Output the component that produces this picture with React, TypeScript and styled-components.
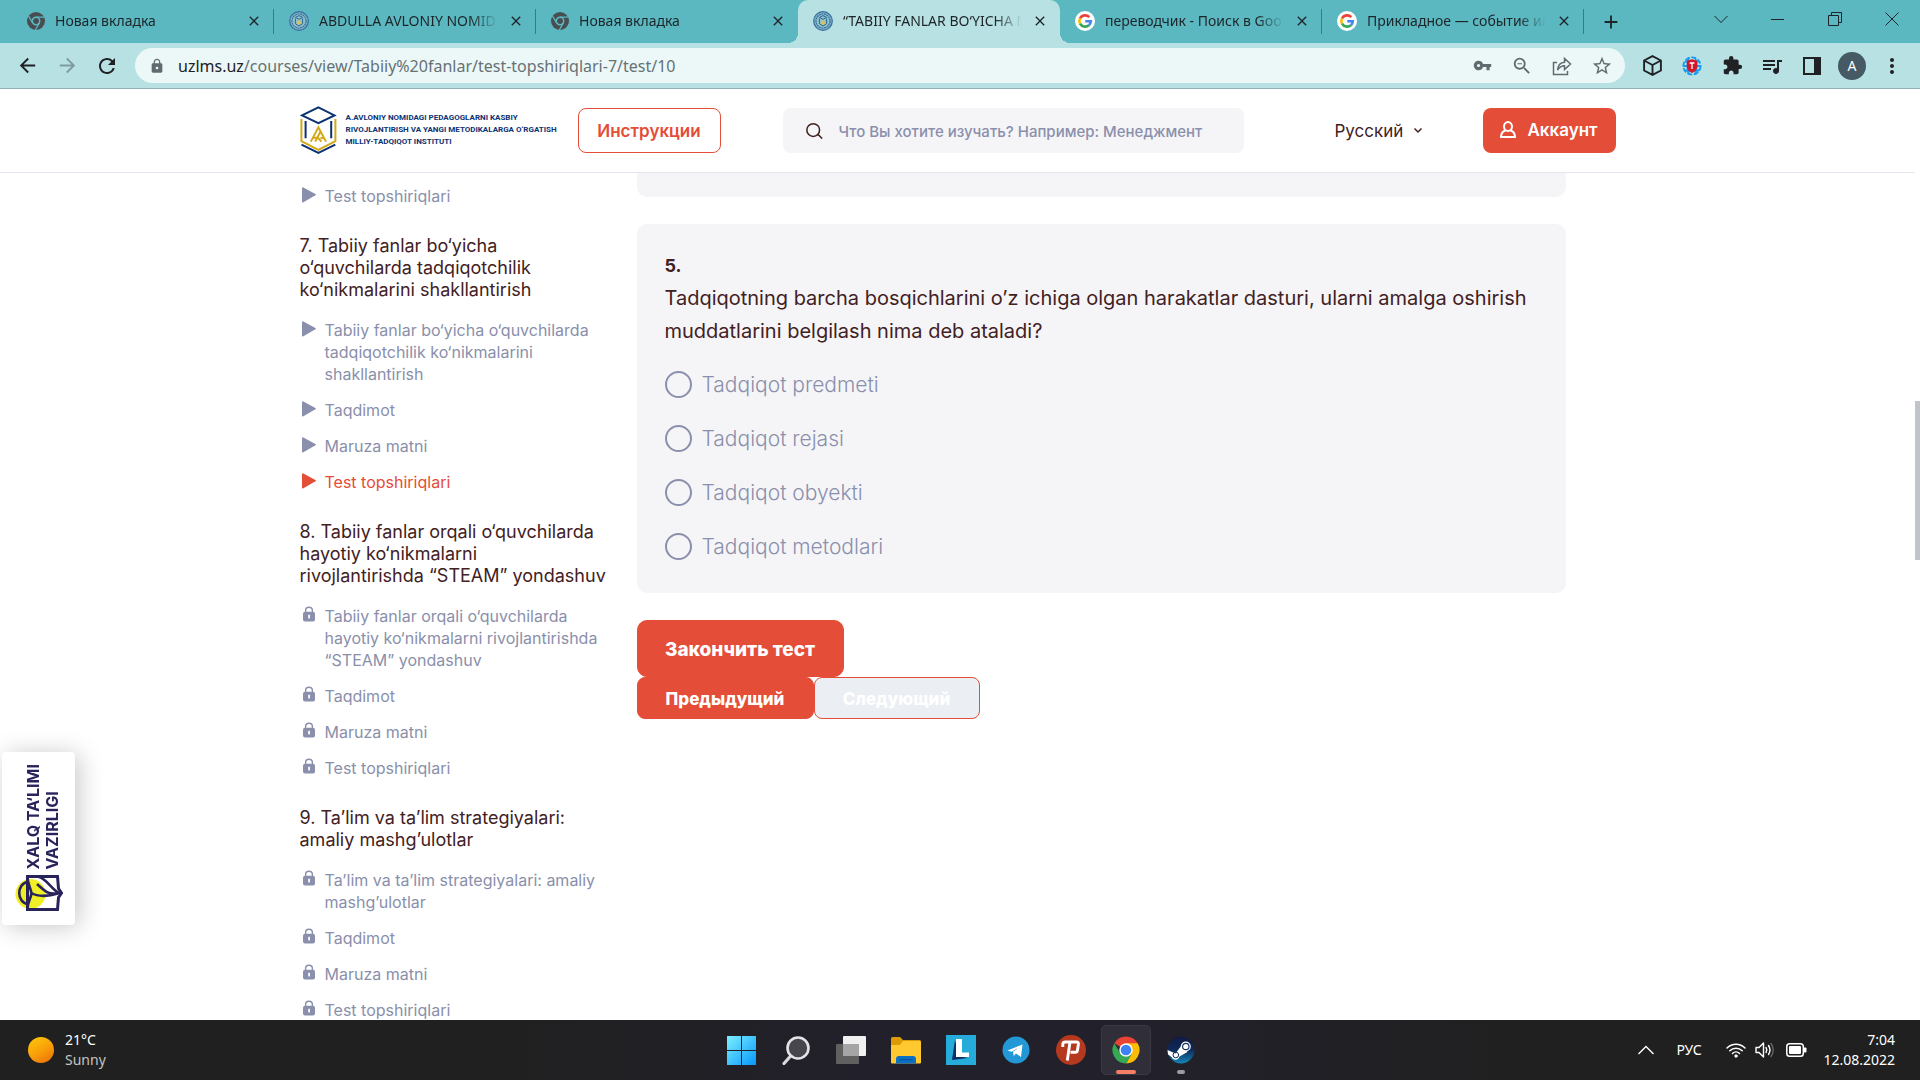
import React from "react";
import styled, { createGlobalStyle, css } from "styled-components";
import {
  MdArrowBack,
  MdArrowForward,
  MdRefresh,
  MdLock,
  MdVpnKey,
  MdZoomOut,
  MdStarBorder,
  MdExtension,
  MdQueueMusic,
  MdMoreVert,
  MdClose,
  MdAdd,
} from "react-icons/md";

const systemFont = `"Noto Sans", "Open Sans", sans-serif`;
const pageFont = `Inter, "Open Sans", sans-serif`;

const colors = {
  teal: "#5bb8c1",
  tealLight: "#b8e1e4",
  omnibox: "#ecf8f8",
  accent: "#e44d37",
  ink: "#42211f",
  muted: "#8a8fab",
  panel: "#f5f5f8",
  navy: "#0b3272",
  gold: "#d4a919",
};

const GlobalStyle = createGlobalStyle`
  *, *::before, *::after { box-sizing: border-box; }
  body { margin: 0; background: #fff; }
  button, input, select { font: inherit; }
  h2, p, ul, fieldset { margin: 0; padding: 0; border: 0; }
  button { border: 0; background: none; padding: 0; color: inherit; }
  a { color: inherit; text-decoration: none; }
  svg { display: block; flex: none; }
`;

const Desktop = styled.div`
  display: flex;
  flex-direction: column;
  height: 100vh;
  overflow: hidden;
  font-family: ${systemFont};
`;

/* Browser tabs */
const TabStrip = styled.div`
  display: flex;
  flex: none;
  height: 43px;
  padding-left: 12px;
  background: ${colors.teal};
  color: #1d2528;
`;

const Tab = styled.div<{ $active?: boolean; $line?: boolean }>`
  display: flex;
  align-items: center;
  flex: 0 1 262px;
  min-width: 0;
  padding: 0 12px 2px 15px;
  gap: 10px;
  font-size: 14px;
  position: relative;
  ${(p) =>
    p.$active &&
    css`
      background: ${colors.tealLight};
      border-radius: 10px 10px 0 0;
      &::before,
      &::after {
        content: "";
        position: absolute;
        bottom: 0;
        width: 10px;
        height: 10px;
      }
      &::before {
        right: 100%;
        background: radial-gradient(circle at 0 0, transparent 10px, ${colors.tealLight} 10px);
      }
      &::after {
        left: 100%;
        background: radial-gradient(circle at 100% 0, transparent 10px, ${colors.tealLight} 10px);
      }
    `}
  ${(p) =>
    p.$line &&
    css`
      background: linear-gradient(#3a7a81, #3a7a81) right center / 1px 25px no-repeat;
    `}
`;

const TabTitle = styled.span`
  flex: 1;
  min-width: 0;
  overflow: hidden;
  white-space: nowrap;
  mask-image: linear-gradient(to right, #000 85%, transparent 100%);
`;

const IconButton = styled.button<{ $w?: number }>`
  display: flex;
  align-items: center;
  justify-content: center;
  flex: none;
  width: ${(p) => p.$w ?? 16}px;
`;

const WindowButtons = styled.div`
  display: flex;
  margin-left: auto;
  padding-bottom: 6px;
`;

/* Browser toolbar */
const Toolbar = styled.div`
  display: flex;
  align-items: center;
  flex: none;
  height: 46px;
  padding: 0 8px 0 7px;
  background: ${colors.tealLight};
  border-bottom: 1px solid #8db2b7;
  color: #202124;
`;

const Omnibox = styled.div`
  display: flex;
  align-items: center;
  flex: 1;
  height: 35px;
  margin: 0 7px 0 8px;
  padding: 0 3px 0 14px;
  border-radius: 18px;
  background: ${colors.omnibox};
  color: #5f6b6e;
`;

const Url = styled.span`
  flex: 1;
  margin-left: 13px;
  font-size: 16px;
  color: #667174;
  b {
    font-weight: 400;
    color: #202124;
  }
`;

const Avatar = styled.button`
  width: 28px;
  height: 28px;
  margin: 0 6px;
  border-radius: 50%;
  background: #455a64;
  color: #fff;
  font-size: 14px;
`;

/* Page */
const Viewport = styled.div`
  display: flex;
  flex: 1;
  min-height: 0;
  position: relative;
`;

const Page = styled.div`
  display: flex;
  flex-direction: column;
  flex: 1;
  min-width: 0;
  font-family: ${pageFont};
  color: ${colors.ink};
`;

const ScrollTrack = styled.div`
  flex: none;
  width: 5px;
  padding-top: 312px;
`;

const ScrollThumb = styled.div`
  height: 159px;
  background: #c1c4c8;
`;

const Header = styled.header`
  flex: none;
  border-bottom: 1px solid #e4e5ee;
`;

const HeaderInner = styled.div`
  display: flex;
  align-items: center;
  width: 100%;
  max-width: 1316px;
  height: 83px;
  margin: 0 auto;
  padding-bottom: 1px;
`;

const Brand = styled.a`
  display: flex;
  align-items: center;
  gap: 9px;
  width: 278px;
  color: ${colors.navy};
  font: 700 8px/12px Roboto, sans-serif;
  white-space: nowrap;
`;

const OutlineButton = styled.button`
  width: 143px;
  height: 45px;
  padding-top: 2px;
  border: 1px solid ${colors.accent};
  border-radius: 8px;
  color: ${colors.accent};
  font-size: 17px;
  font-weight: 600;
`;

const Search = styled.label`
  display: flex;
  align-items: center;
  gap: 16px;
  width: 461px;
  height: 45px;
  margin-left: 62px;
  padding: 0 23px;
  border-radius: 8px;
  background: ${colors.panel};
  input {
    flex: 1;
    min-width: 0;
    padding: 2px 0 0;
    border: 0;
    outline: 0;
    background: none;
    font-size: 15px;
    font-weight: 500;
  }
  input::placeholder {
    color: ${colors.muted};
    opacity: 1;
  }
`;

const Language = styled.label`
  display: flex;
  align-items: center;
  gap: 9px;
  margin-left: 91px;
  select {
    appearance: none;
    padding: 2px 0 0;
    border: 0;
    background: none;
    color: ${colors.ink};
    font-size: 17px;
  }
`;

const Account = styled.button`
  display: flex;
  align-items: center;
  justify-content: center;
  gap: 11px;
  width: 133px;
  height: 45px;
  margin-left: auto;
  border-radius: 8px;
  background: ${colors.accent};
  color: #fff;
  font-size: 17px;
  font-weight: 600;
`;

const Content = styled.div`
  display: grid;
  grid-template-columns: 312px minmax(0, 1fr);
  grid-template-rows: minmax(0, 1fr);
  column-gap: 25px;
  flex: 1;
  min-height: 0;
  width: 100%;
  max-width: 1316px;
  margin: 0 auto;
  padding-right: 50px;
  overflow: hidden;
`;

const Sidebar = styled.nav`
  padding-top: 12px;
`;

const SectionTitle = styled.h2`
  margin: 28px 0 18px;
  font-size: 18px;
  font-weight: 400;
  line-height: 22px;
  white-space: pre-line;
`;

const LessonList = styled.ul`
  display: grid;
  gap: 14px;
  list-style: none;
`;

const Lesson = styled.a<{ $current?: boolean }>`
  display: flex;
  gap: 9px;
  padding-left: 2px;
  font-size: 16px;
  line-height: 22px;
  color: ${(p) => (p.$current ? colors.accent : colors.muted)};
`;

const Main = styled.main`
  display: flex;
  flex-direction: column;
  align-items: stretch;
`;

const PreviousCard = styled.div`
  flex: none;
  height: 24px;
  margin-bottom: 27px;
  border-radius: 0 0 10px 10px;
  background: ${colors.panel};
`;

const Card = styled.fieldset`
  flex: none;
  margin-bottom: 27px;
  padding: 26px 28px 20px;
  border-radius: 10px;
  background: ${colors.panel};
`;

const Question = styled.div`
  margin-bottom: 9px;
  font-size: 20px;
  line-height: 33px;
  strong {
    display: block;
    line-height: 32px;
    font-size: 18px;
  }
`;

const Option = styled.label`
  display: flex;
  align-items: center;
  gap: 10px;
  height: 54px;
  color: ${colors.muted};
  font-size: 21px;
  font-weight: 300;
  input {
    appearance: none;
    width: 27px;
    height: 27px;
    margin: 0;
    border: 2px solid ${colors.muted};
    border-radius: 50%;
  }
`;

const TestButton = styled.button<{ $large?: boolean; $off?: boolean }>`
  align-self: flex-start;
  width: ${(p) => (p.$large ? 207 : p.$off ? 166 : 177)}px;
  height: ${(p) => (p.$large ? 57 : 42)}px;
  padding-top: 2px;
  border: 1px solid ${colors.accent};
  border-radius: ${(p) => (p.$large ? 10 : 8)}px;
  background: ${(p) => (p.$off ? "#ebeef3" : colors.accent)};
  color: #fff;
  font-size: ${(p) => (p.$large ? 19 : 17)}px;
  font-weight: 800;
`;

const Row = styled.div`
  display: flex;
`;

const Ministry = styled.a`
  position: absolute;
  left: 2px;
  top: 663px;
  display: flex;
  flex-direction: column;
  align-items: center;
  justify-content: space-between;
  width: 73px;
  height: 173px;
  padding: 12px 0 13px;
  border-radius: 4px;
  background: #fff;
  box-shadow: 4px 2px 24px rgba(0, 0, 0, 0.22);
  color: #29235c;
  font: 700 16px/19px Inter, sans-serif;
  span {
    margin-left: 8px;
    writing-mode: vertical-rl;
    transform: rotate(180deg);
    white-space: nowrap;
  }
`;

/* Taskbar */
const Taskbar = styled.footer`
  display: grid;
  grid-template-columns: 1fr auto 1fr;
  align-items: center;
  flex: none;
  height: 60px;
  background: linear-gradient(90deg, #202020 25%, #22202a 45%, #22202a 60%, #202020 80%);
  color: #fff;
  font-size: 14px;
  line-height: 20px;
`;

const Weather = styled.div`
  display: flex;
  align-items: center;
  gap: 11px;
  padding-left: 28px;
  small {
    display: block;
    font-size: 14px;
    color: #c4c4c4;
  }
`;

const Sun = styled.div`
  width: 26px;
  height: 26px;
  border-radius: 50%;
  background: linear-gradient(150deg, #ffc80a, #f9a208 50%, #ea6a08);
`;

const Apps = styled.div`
  display: flex;
  gap: 5px;
  padding-left: 1px;
`;

const AppButton = styled.button<{ $state?: "active" | "open" }>`
  display: flex;
  align-items: center;
  justify-content: center;
  position: relative;
  width: 50px;
  height: 50px;
  border: 1px solid ${(p) => (p.$state === "active" ? "#3b3943" : "transparent")};
  border-radius: 5px;
  background: ${(p) => (p.$state === "active" ? "#302e38" : "none")};
  &::after {
    content: "";
    position: absolute;
    bottom: 0;
    width: ${(p) => (p.$state === "active" ? 20 : p.$state ? 8 : 0)}px;
    height: 4px;
    border-radius: 2px;
    background: ${(p) => (p.$state === "active" ? "#f47f65" : "#9b9aa0")};
  }
`;

const Tray = styled.div`
  display: flex;
  align-items: center;
  justify-content: flex-end;
  padding-right: 25px;
`;

const Clock = styled.div`
  width: 79px;
  text-align: right;
`;

/* Drawings */
const ChromeGray = () => (
  <svg width="18" height="18" viewBox="0 0 18 18">
    <circle cx="9" cy="9" r="9" fill="#474d50" />
    <circle cx="9" cy="9" r="3.7" fill="none" stroke={colors.teal} strokeWidth="1.5" />
    <path d="M9 5.1h8.2M5.6 10.9L1.5 4M12.4 10.9L8.3 18" stroke={colors.teal} strokeWidth="1.3" />
  </svg>
);

const Seal = () => (
  <svg width="20" height="20" viewBox="0 0 20 20">
    <circle cx="10" cy="10" r="9.3" fill="#7fb2c6" stroke="#356f9c" strokeWidth="1.2" />
    <circle cx="10" cy="10" r="7" fill="#8fc2cb" stroke="#3a73a0" strokeWidth="1.2" strokeDasharray="2 .6" />
    <path d="M10 4.6l3.6 1.8L10 8.3 6.4 6.4zM6.4 7.5v5.2l3.6 2.3 3.6-2.3V7.5" fill="none" stroke="#2f6695" />
    <path d="M7.6 12.3L10 8.6l2.4 3.7L10 14z" fill="#d6c35a" />
  </svg>
);

const GoogleIcon = () => (
  <svg width="20" height="20" viewBox="0 0 20 20">
    <circle cx="10" cy="10" r="10" fill="#fff" />
    <g fill="none" strokeWidth="2.6">
      <path d="M14.3 6.2A5.8 5.8 0 0 0 5 7.3" stroke="#ea4335" />
      <path d="M5 7.3a5.8 5.8 0 0 0 0 5.4" stroke="#fbbc05" />
      <path d="M5 12.7a5.8 5.8 0 0 0 8.9 1.5" stroke="#34a853" />
      <path d="M13.9 14.2a5.8 5.8 0 0 0 1.9-4H10.3" stroke="#4285f4" />
    </g>
  </svg>
);

const Line = ({ d, s = 20, w = 1, box = 20 }: { d: string; s?: number; w?: number; box?: number }) => (
  <svg width={s} height={s} viewBox={`0 0 ${box} ${box}`} fill="none" stroke="currentColor" strokeWidth={w}>
    <path d={d} />
  </svg>
);

const ShieldGlobe = () => (
  <svg width="20" height="20" viewBox="0 0 20 20">
    <g fill="none" stroke="#159cf0" strokeWidth="1.8">
      <circle cx="10" cy="10" r="8.6" strokeDasharray="5 1.6" />
      <path d="M1 10h18M3 5.5h14M3 14.5h14M7 1.5c-2 5-2 12 0 17M13 1.5c2 5 2 12 0 17" />
    </g>
    <path d="M10 3.2l5.2 1.6v5.6c0 3.2-2.4 5.2-5.2 6.6-2.8-1.4-5.2-3.4-5.2-6.6V4.8z" fill="#d3182c" />
    <path d="M7.6 7h4.8M10 7v6" stroke="#fff" strokeWidth="1.3" />
  </svg>
);

const BrandMark = () => (
  <svg width="37" height="48" viewBox="0 0 37 48" fill="none" strokeWidth="2">
    <path d="M18.4 1.4L34.5 9.4 18.4 17.2 2 9.4z" stroke={colors.navy} />
    <path d="M1.4 13v22.2l17 8.6 17-8.6V13" stroke={colors.gold} />
    <path d="M5.6 15v17.3M31.2 15v17.3M1.5 38.6l16.9 8.2 16.9-8.2" stroke={colors.navy} />
    <path d="M10.8 35.6l7.6-14.2 7.6 14.2M15.2 35.6l5.2-9.8M13 31.8h5l3.4 3.8M20.5 32h4" stroke={colors.gold} />
  </svg>
);

const PlayIcon = () => (
  <svg width="14" height="18" viewBox="0 -2 14 18">
    <path d="M0 1.2Q0-.3 1.4.4L13.4 7q1 .6 0 1.2L1.4 15.3Q0 15.9 0 14.5z" fill="currentColor" />
  </svg>
);

const LockIcon = () => (
  <svg width="14" height="17" viewBox="0 -1 14 17">
    <path d="M3.6 7V4.6a3.4 3.4 0 0 1 6.8 0V7" fill="none" stroke="currentColor" strokeWidth="1.4" />
    <rect x="1" y="5.8" width="12" height="9.6" rx="2" fill="currentColor" />
    <rect x="6.2" y="8.8" width="1.8" height="3.6" fill="#fff" />
  </svg>
);

const MinistryMark = () => (
  <svg width="48" height="38" viewBox="0 0 48 38" fill="none" stroke="#29235c" strokeWidth="3">
    <circle cx="15.5" cy="20" r="15" fill="#f0ee26" stroke="none" />
    <path d="M12.5 2.5h30l1 12 3 4.5-3 4.5-1 12h-30z" />
    <path d="M12.5 8C1.5 10 1.5 28 12.5 30M12.5 2.5c0 8 3 10 4 17-1 6-4 8-4 16M24 3c8 2 12 12 20 16-12 2-14-2-22-9M16.5 19c8 5 18 3 28 0" strokeWidth="2.6" />
  </svg>
);

const StartIcon = () => (
  <svg width="30" height="30" viewBox="0 0 30 30">
    <defs>
      <linearGradient id="start" x1="0" y1="0" x2="1" y2="1">
        <stop stopColor="#7cf0ff" />
        <stop offset="1" stopColor="#0796fb" />
      </linearGradient>
    </defs>
    <path d="M1 1.5Q1 1 1.5 1H15v14H1zM16 1h13.5q.5 0 .5.5V15H16zM1 16h14v14H1.5Q1 30 1 29.5zM16 16h14v13.5q0 .5-.5.5H16z" fill="url(#start)" />
  </svg>
);

const SearchTask = () => (
  <svg width="30" height="30" viewBox="0 0 30 30">
    <path d="M10.5 20L3 28.5" stroke="#d8dadd" strokeWidth="3.2" strokeLinecap="round" />
    <circle cx="17" cy="13" r="10.5" fill="#46464c" stroke="#e2e4e6" strokeWidth="2.6" />
  </svg>
);

const TaskView = () => (
  <svg width="30" height="30" viewBox="0 0 30 30">
    <rect x="7" y="1" width="23" height="20" rx="1" fill="#f0f0f0" />
    <rect x="0" y="9" width="23" height="20" rx="1" fill="#606060" />
    <rect x="7" y="9" width="16" height="12" fill="#a5a5a5" />
  </svg>
);

const Folder = () => (
  <svg width="30" height="30" viewBox="0 0 30 30">
    <path d="M0 3.5Q0 2 1.5 2H9l3 3h16.5Q30 5 30 6.5V12H0z" fill="#dd9b08" />
    <path d="M0 10h9l3-4h16.5Q30 6 30 7.5v20q0 1-1 1H1q-1 0-1-1z" fill="#ffc92f" />
    <path d="M5 28.5V24q0-3 3-3h14q3 0 3 3v4.5z" fill="#0b6fc4" />
    <path d="M8.5 24.7h13" stroke="#084e96" />
  </svg>
);

const LetterL = () => (
  <svg width="30" height="30" viewBox="0 0 30 30">
    <path d="M0 0h30v30H0z" fill="#25acdb" />
    <path d="M9 5L6 25l16-2-9-2z" fill="#0b2f66" />
    <path d="M10 4h6v13.5h7V22H10z" fill="#fff" />
  </svg>
);

const Telegram = () => (
  <svg width="28" height="28" viewBox="0 0 28 28">
    <circle cx="14" cy="14" r="13.5" fill="#2298d6" />
    <path d="M5.5 14.5L20.5 8.5l-1.5 12.5-5-3.5-2.2 2.5-.8-4.3L17 11.5l-7.5 4.3z" fill="#fff" />
  </svg>
);

const PlayerP = () => (
  <svg width="30" height="30" viewBox="0 0 30 30">
    <circle cx="15" cy="15" r="15" fill="#b5391e" />
    <path d="M11.3 25.5L14 7M6.8 12V9.5q0-2.5 2.5-2.5h11.2q2.2 0 1.9 2l-.9 6.3q-.3 2-2.2 2H14.5" fill="none" stroke="#fff" strokeWidth="2.9" />
  </svg>
);

const Chrome = () => (
  <svg width="28" height="28" viewBox="0 0 28 28">
    <path d="M14 14L2.3 7.25A13.5 13.5 0 0 1 25.7 7.25z" fill="#ea4335" />
    <path d="M14 7.25h11.7A13.5 13.5 0 0 1 14 27.5l5.85-10.1z" fill="#fbbc05" />
    <path d="M14 27.5A13.5 13.5 0 0 1 2.3 7.25l5.85 10.12L14 20.75l5.85-3.35z" fill="#34a853" />
    <circle cx="14" cy="14" r="6.75" fill="#fff" />
    <circle cx="14" cy="14" r="5.3" fill="#3b82f4" />
  </svg>
);

const Steam = () => (
  <svg width="28" height="28" viewBox="0 0 28 28">
    <defs>
      <linearGradient id="steam" x1="0" y1="0" x2="0" y2="1">
        <stop stopColor="#101a45" />
        <stop offset=".5" stopColor="#0f2a58" />
        <stop offset="1" stopColor="#1387b8" />
      </linearGradient>
    </defs>
    <circle cx="14" cy="14" r="13.5" fill="url(#steam)" />
    <path d="M.5 14l8 3.5 6-8 6 6.5-8 4.5a4.2 4.2 0 0 1-8 .5L1 18.5z" fill="#fff" />
    <circle cx="18.8" cy="10.5" r="5" fill="#fff" />
    <circle cx="18.8" cy="10.5" r="3.2" fill="#fff" stroke="#14305e" strokeWidth="1.2" />
    <circle cx="8.8" cy="19" r="2.8" fill="none" stroke="#14305e" />
  </svg>
);

const Wifi = () => (
  <svg width="20" height="16" viewBox="0 0 20 16" fill="none" stroke="#fff" strokeWidth="1.5" strokeLinecap="round">
    <path d="M1 6a12.7 12.7 0 0 1 18 0M3.8 8.8a8.8 8.8 0 0 1 12.4 0M6.5 11.5a5 5 0 0 1 7 0" />
    <circle cx="10" cy="14" r="1.2" fill="#fff" strokeWidth="1" />
  </svg>
);

const Volume = () => (
  <svg width="20" height="18" viewBox="0 0 20 18" fill="none" stroke="#fff" strokeWidth="1.4" strokeLinecap="round" strokeLinejoin="round">
    <path d="M1 6.5h3L8.5 2v14L4 11.5H1zM11 6.5q1.6 2.5 0 5M13.5 4.5q3 4.5 0 9" />
    <path d="M16 2.5q4.5 6.5 0 13" stroke="#666" />
  </svg>
);

const Battery = () => (
  <svg width="21" height="14" viewBox="0 0 21 14">
    <rect x=".8" y=".8" width="16.5" height="12.4" rx="2.8" fill="none" stroke="#fff" strokeWidth="1.5" />
    <rect x="3" y="3" width="12" height="8" rx="1" fill="#fff" />
    <path d="M18 4.5h1.5q1 0 1 1v3q0 1-1 1H18z" fill="#fff" />
  </svg>
);

const tabs = [
  { title: "Новая вкладка", icon: <ChromeGray />, line: true },
  { title: "ABDULLA AVLONIY NOMID", icon: <Seal />, line: true },
  { title: "Новая вкладка", icon: <ChromeGray /> },
  { title: "“TABIIY FANLAR BO‘YICHA M", icon: <Seal />, active: true },
  { title: "переводчик - Поиск в Goo", icon: <GoogleIcon />, line: true },
  { title: "Прикладное — событие ил", icon: <GoogleIcon />, line: true },
];

const sections = [
  {
    title: "7. Tabiiy fanlar bo‘yicha\no‘quvchilarda tadqiqotchilik ko‘nikmalarini shakllantirish",
    lessons: ["Tabiiy fanlar bo‘yicha o‘quvchilarda tadqiqotchilik ko‘nikmalarini shakllantirish", "Taqdimot", "Maruza matni", "Test topshiriqlari"],
    current: 3,
  },
  {
    title: "8. Tabiiy fanlar orqali o‘quvchilarda hayotiy ko‘nikmalarni\nrivojlantirishda “STEAM” yondashuv",
    lessons: ["Tabiiy fanlar orqali o‘quvchilarda hayotiy ko‘nikmalarni rivojlantirishda “STEAM” yondashuv", "Taqdimot", "Maruza matni", "Test topshiriqlari"],
    locked: true,
  },
  {
    title: "9. Ta’lim va ta’lim strategiyalari: amaliy mashg’ulotlar",
    lessons: ["Ta’lim va ta’lim strategiyalari: amaliy mashg’ulotlar", "Taqdimot", "Maruza matni", "Test topshiriqlari"],
    locked: true,
  },
];

const options = ["Tadqiqot predmeti", "Tadqiqot rejasi", "Tadqiqot obyekti", "Tadqiqot metodlari"];

export default function App() {
  return (
    <Desktop>
      <GlobalStyle />
      <TabStrip>
        {tabs.map((t, i) => (
          <Tab key={i} $active={t.active} $line={t.line}>
            {t.icon}
            <TabTitle>{t.title}</TabTitle>
            <IconButton aria-label="Закрыть вкладку"><MdClose size={16} /></IconButton>
          </Tab>
        ))}
        <IconButton $w={54} aria-label="Новая вкладка"><MdAdd size={22} /></IconButton>
        <WindowButtons>
          <IconButton $w={57} aria-label="Поиск вкладок"><Line s={14} box={14} d="M.5 4l6.5 6.5L13.5 4" /></IconButton>
          <IconButton $w={57} aria-label="Свернуть"><Line s={14} box={14} d="M0 7.5h13" /></IconButton>
          <IconButton $w={57} aria-label="Развернуть"><Line s={14} box={14} d="M.5 3.5h10v10H.5zM3.5 3.5V.5h10v10h-3" /></IconButton>
          <IconButton $w={57} aria-label="Закрыть"><Line s={14} box={14} d="M.5.5l13 13M13.5.5l-13 13" /></IconButton>
        </WindowButtons>
      </TabStrip>
      <Toolbar>
        <IconButton $w={40} aria-label="Назад"><MdArrowBack size={23} /></IconButton>
        <IconButton $w={40} aria-label="Вперёд"><MdArrowForward size={23} color="#7f9b9f" /></IconButton>
        <IconButton $w={40} aria-label="Обновить"><MdRefresh size={24} /></IconButton>
        <Omnibox>
          <MdLock size={16} />
          <Url><b>uzlms.uz</b>/courses/view/Tabiiy%20fanlar/test-topshiriqlari-7/test/10</Url>
          <IconButton $w={40} aria-label="Пароли"><MdVpnKey size={19} /></IconButton>
          <IconButton $w={40} aria-label="Масштаб"><MdZoomOut size={22} /></IconButton>
          <IconButton $w={40} aria-label="Поделиться">
            <Line w={1.5} d="M5 6.5H1.5v12h14V15M5.5 14c.5-5 3-7.5 7-7.7V2.5l6 5.5-6 5.5V9.8c-3 0-5 1.2-7 4.2z" />
          </IconButton>
          <IconButton $w={40} aria-label="Закладка"><MdStarBorder size={22} /></IconButton>
        </Omnibox>
        <IconButton $w={40} aria-label="Куб">
          <Line s={21} w={1.8} d="M10 1l8 4.2v9.6L10 19l-8-4.2V5.2zM2 5.2l8 4.3 8-4.3M10 9.5V19" />
        </IconButton>
        <IconButton $w={40} aria-label="Щит"><ShieldGlobe /></IconButton>
        <IconButton $w={40} aria-label="Расширения"><MdExtension size={21} /></IconButton>
        <IconButton $w={40} aria-label="Музыка"><MdQueueMusic size={24} /></IconButton>
        <IconButton $w={40} aria-label="Боковая панель">
          <svg width="18" height="18" viewBox="0 0 18 18"><path d="M0 0h18v18H0zM2 2v14h9V2z" fillRule="evenodd" fill="currentColor" /></svg>
        </IconButton>
        <Avatar aria-label="Профиль">A</Avatar>
        <IconButton $w={40} aria-label="Меню"><MdMoreVert size={24} /></IconButton>
      </Toolbar>

      <Viewport>
        <Page>
          <Header>
            <HeaderInner>
              <Brand href="#">
                <BrandMark />
                <span>
                  A.AVLONIY NOMIDAGI PEDAGOGLARNI KASBIY
                  <br />
                  RIVOJLANTIRISH VA YANGI METODIKALARGA O‘RGATISH
                  <br />
                  MILLIY-TADQIQOT INSTITUTI
                </span>
              </Brand>
              <OutlineButton>Инструкции</OutlineButton>
              <Search>
                <Line s={17} w={1.8} d="M16 9.5a7.5 7.5 0 1 1-15 0a7.5 7.5 0 0 1 15 0zM14 14.5l5 5" />
                <input aria-label="Поиск" placeholder="Что Вы хотите изучать? Например: Менеджмент" />
              </Search>
              <Language>
                <select aria-label="Язык"><option>Русский</option></select>
                <Line s={10} box={10} w={1.5} d="M1.5 3.5L5 7l3.5-3.5" />
              </Language>
              <Account>
                <svg width="16" height="18" viewBox="0 0 16 18" fill="none" stroke="#fff" strokeWidth="2">
                  <ellipse cx="8" cy="5.5" rx="4" ry="4.5" />
                  <path d="M5.5 9.5C2.5 10.5 1 13 1 16h14c0-3-1.5-5.5-4.5-6.5" />
                </svg>
                Аккаунт
              </Account>
            </HeaderInner>
          </Header>
          <Content>
            <Sidebar>
              <LessonList>
                <li><Lesson href="#"><PlayIcon /><span>Test topshiriqlari</span></Lesson></li>
              </LessonList>
              {sections.map((s) => (
                <section key={s.title}>
                  <SectionTitle>{s.title}</SectionTitle>
                  <LessonList>
                    {s.lessons.map((l, i) => (
                      <li key={l}>
                        <Lesson href="#" $current={s.current === i}>
                          {s.locked ? <LockIcon /> : <PlayIcon />}
                          <span>{l}</span>
                        </Lesson>
                      </li>
                    ))}
                  </LessonList>
                </section>
              ))}
            </Sidebar>
            <Main>
              <PreviousCard />
              <Card aria-labelledby="question">
                <Question id="question">
                  <strong>5.</strong>
                  Tadqiqotning barcha bosqichlarini o’z ichiga olgan harakatlar dasturi, ularni amalga oshirish muddatlarini belgilash nima deb ataladi?
                </Question>
                {options.map((o) => (
                  <Option key={o}>
                    <input type="radio" name="answer" />
                    {o}
                  </Option>
                ))}
              </Card>
              <TestButton $large>Закончить тест</TestButton>
              <Row>
                <TestButton>Предыдущий</TestButton>
                <TestButton $off>Следующий</TestButton>
              </Row>
            </Main>
          </Content>
        </Page>
        <ScrollTrack><ScrollThumb /></ScrollTrack>
        <Ministry href="#">
          <span>XALQ TA‘LIMI<br />VAZIRLIGI</span>
          <MinistryMark />
        </Ministry>
      </Viewport>

      <Taskbar>
        <Weather>
          <Sun />
          <div>21°C<small>Sunny</small></div>
        </Weather>
        <Apps>
          <AppButton aria-label="Пуск"><StartIcon /></AppButton>
          <AppButton aria-label="Поиск"><SearchTask /></AppButton>
          <AppButton aria-label="Представление задач"><TaskView /></AppButton>
          <AppButton aria-label="Проводник"><Folder /></AppButton>
          <AppButton aria-label="L"><LetterL /></AppButton>
          <AppButton aria-label="Telegram"><Telegram /></AppButton>
          <AppButton aria-label="Плеер"><PlayerP /></AppButton>
          <AppButton aria-label="Chrome" $state="active"><Chrome /></AppButton>
          <AppButton aria-label="Steam" $state="open"><Steam /></AppButton>
        </Apps>
        <Tray>
          <IconButton $w={28} aria-label="Скрытые значки"><Line s={16} box={16} w={1.4} d="M.5 12L8 4.5 15.5 12" /></IconButton>
          <IconButton $w={58}>РУС</IconButton>
          <IconButton $w={36} aria-label="Wi-Fi"><Wifi /></IconButton>
          <IconButton $w={22} aria-label="Громкость"><Volume /></IconButton>
          <IconButton $w={40} aria-label="Батарея"><Battery /></IconButton>
          <Clock>7:04<br />12.08.2022</Clock>
        </Tray>
      </Taskbar>
    </Desktop>
  );
}
